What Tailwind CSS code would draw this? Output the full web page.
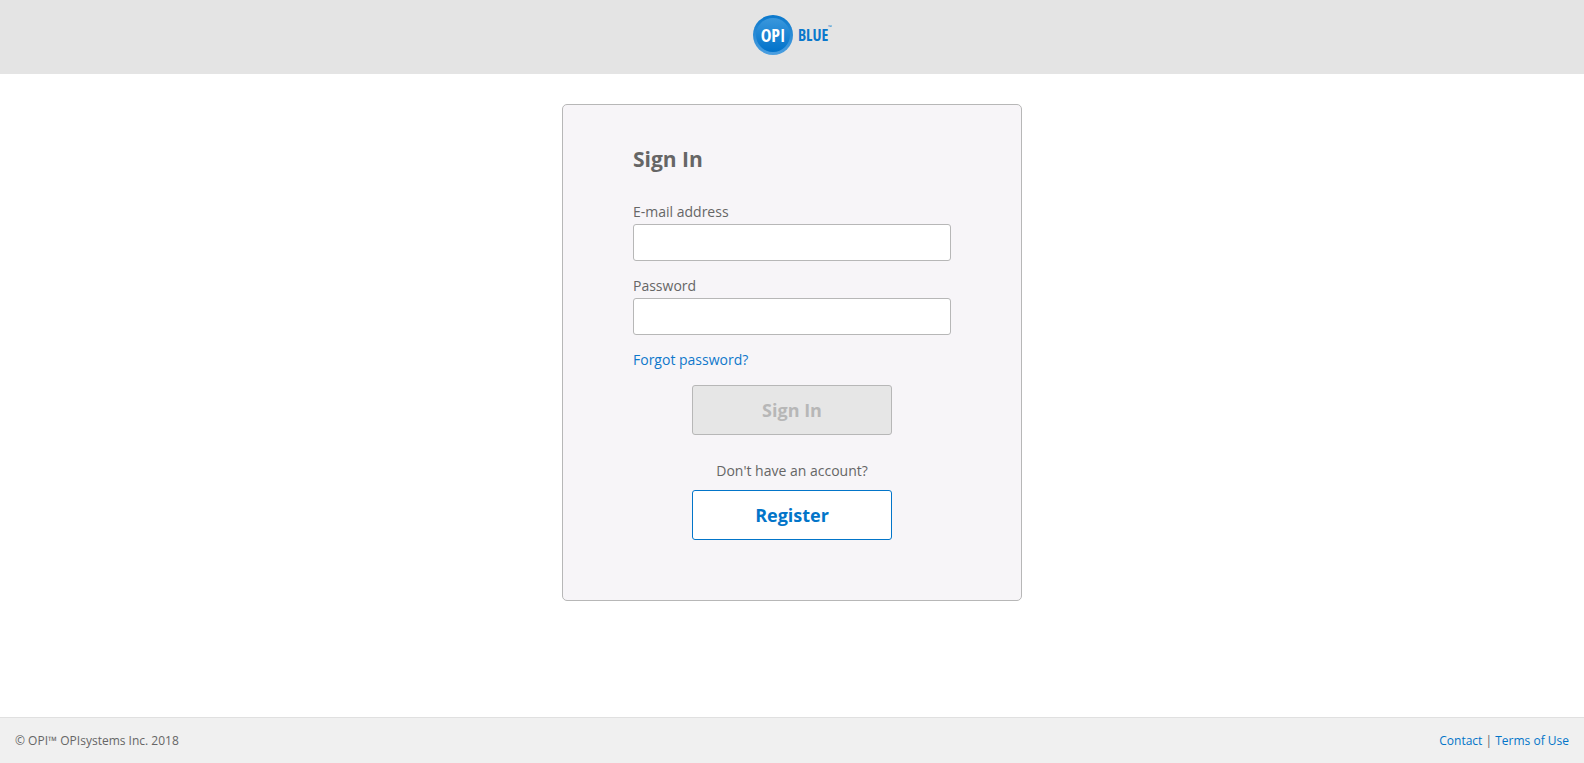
<!DOCTYPE html>
<html lang="en">
<head>
<meta charset="utf-8">
<meta name="viewport" content="width=device-width, initial-scale=1">
<title>OPI Blue - Sign In</title>
<script src="https://cdn.jsdelivr.net/npm/@tailwindcss/browser@4"></script>
</head>
<body class="flex min-h-screen flex-col bg-white font-['Open_Sans',sans-serif] text-sm leading-5 text-[#666666]">
  <header class="flex justify-center bg-[#e4e4e4] pt-[14px] pb-[18px]">
    <svg class="h-[42px] w-20" viewBox="0 0 80 42" role="img" aria-label="OPI Blue">
      <defs>
        <linearGradient id="disc" x1="0" y1="0" x2="0" y2="1">
          <stop offset="0" stop-color="#3a97dc"/>
          <stop offset="1" stop-color="#0072ca"/>
        </linearGradient>
        <linearGradient id="rim" x1="0" y1="0" x2="0" y2="1">
          <stop offset="0" stop-color="#0a78cc"/>
          <stop offset="1" stop-color="#4c9fe0"/>
        </linearGradient>
      </defs>
      <circle cx="21" cy="21" r="20" fill="url(#rim)"/>
      <circle cx="21" cy="21" r="17" fill="url(#disc)"/>
      <text x="21" y="28" text-anchor="middle" fill="#ffffff" class="font-['Noto_Sans_ExtraCondensed_SemiBold','Open_Sans_Condensed','Liberation_Sans_Narrow',sans-serif] text-[18px] font-semibold">OPI</text>
      <text x="46" y="27" fill="#0a78cc" class="font-['Noto_Sans_ExtraCondensed_SemiBold','Open_Sans_Condensed','Liberation_Sans_Narrow',sans-serif] text-[16px] font-semibold">BLUE</text>
      <text x="76" y="15" fill="#0a78cc" class="font-['Open_Sans',sans-serif] text-[5px]">™</text>
    </svg>
  </header>

  <main class="flex flex-1 items-start justify-center py-[30px]">
    <form class="flex w-full max-w-[460px] flex-col rounded-[5px] border border-[#b7b7b7] bg-[#f7f5f8] px-[70px] pt-10 pb-[60px]">
      <h1 class="mb-7 text-[21px] leading-[29px] font-bold">Sign In</h1>

      <label for="email" class="mb-[2px]">E-mail address</label>
      <input id="email" type="email" class="mb-[15px] h-[37px] rounded-[3px] border border-[#b7b7b7] bg-white px-2">

      <label for="password" class="mb-[2px]">Password</label>
      <input id="password" type="password" class="mb-[15px] h-[37px] rounded-[3px] border border-[#b7b7b7] bg-white px-2">

      <a href="#" class="mb-[15px] self-start text-[#0f78cb]">Forgot password?</a>

      <button type="submit" disabled class="h-[50px] w-[200px] self-center rounded-[3px] border border-[#b7b7b7] bg-[#e6e6e6] text-lg font-bold text-[#b7b7b7]">Sign In</button>

      <p class="mt-[26px] mb-[9px] text-center">Don't have an account?</p>
      <button type="button" class="h-[50px] w-[200px] self-center rounded-[3px] border border-[#0275c9] bg-white text-lg font-bold text-[#0275c9]">Register</button>
    </form>
  </main>

  <footer class="flex items-center justify-between border-t border-[#e0e0e0] bg-[#f0f0f0] px-[15px] py-[13px] text-xs leading-[19px]">
    <p>© OPI™ OPIsystems Inc. 2018</p>
    <nav aria-label="Footer"><a href="#" class="text-[#0275c9]">Contact</a> | <a href="#" class="text-[#0275c9]">Terms of Use</a></nav>
  </footer>
</body>
</html>
